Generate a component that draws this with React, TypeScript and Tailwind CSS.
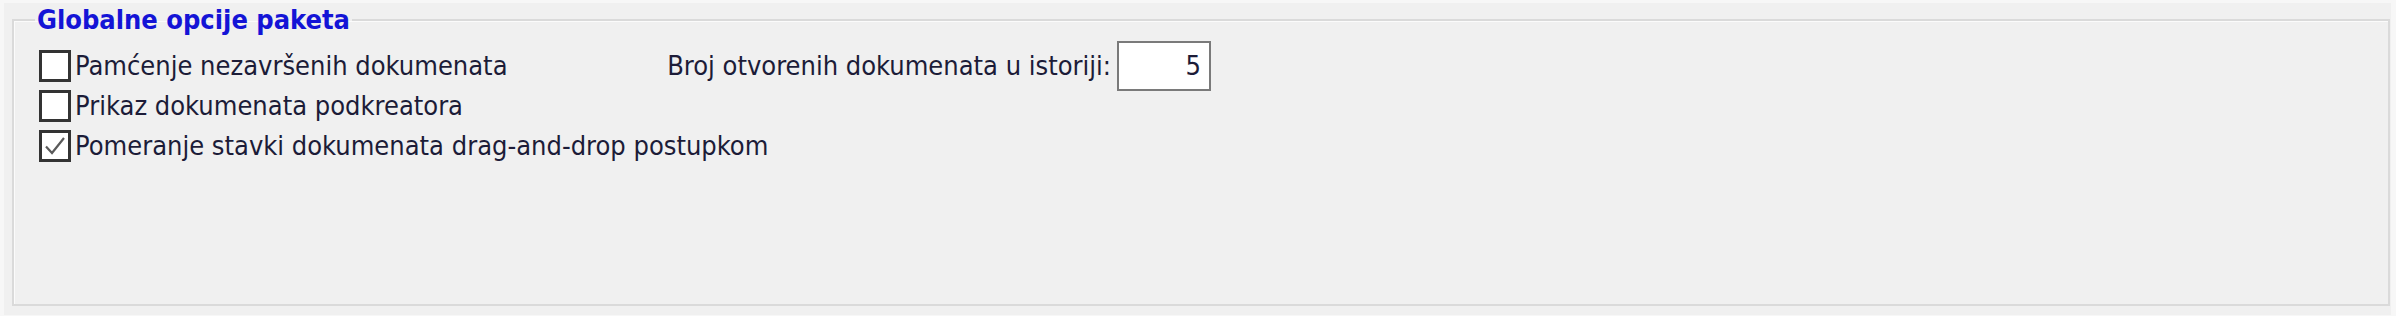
import React from "react";

const font = {
  fontFamily: '"DejaVu Sans Condensed", "DejaVu Sans", Tahoma, sans-serif',
};

const Box = ({ checked }: { checked?: boolean }) => (
  <span className="flex h-[32px] w-[32px] shrink-0 items-center justify-center border-[3px] border-[#333333] bg-white">
    {checked && (
      <svg width="24" height="24" viewBox="0 0 24 24" fill="none">
        <path d="M3 12.5 L9 19 L21 4" stroke="#5a5a5a" strokeWidth="2.2" />
      </svg>
    )}
  </span>
);

const Option = ({ label, checked }: { label: string; checked?: boolean }) => (
  <label className="flex items-center gap-[4px]">
    <Box checked={checked} />
    <span className="whitespace-nowrap">{label}</span>
  </label>
);

export default function App() {
  return (
    <div className="h-[316px] w-[2396px] bg-[#f7f7f7] pl-[4px] pr-[5px] pt-[3px] pb-[1px]" style={font}>
      <div className="h-full bg-[#f0f0f0] pl-[8px] pr-[1px] pt-[3px] text-[27px] leading-[40px] text-[#1c1c38]">
        <fieldset className="h-[300px] border-2 border-[#dadada] pl-[25px] shadow-[inset_1px_1px_0_#fbfbfb]">
          <legend className="ml-[-4px] px-[2px] text-[27px] font-bold leading-[28px] text-[#1414d6]">
            Globalne opcije paketa
          </legend>
          <div className="pt-[12px]">
            <div className="flex h-[40px] w-[1172px] items-center justify-between">
              <Option label="Pamćenje nezavršenih dokumenata" />
              <div className="flex items-center gap-[6px]">
                <span className="whitespace-nowrap">Broj otvorenih dokumenata u istoriji:</span>
                <div className="flex h-[50px] w-[94px] items-center justify-end border-2 border-[#7a7a7a] bg-white pr-[8px]">
                  5
                </div>
              </div>
            </div>
            <div className="flex h-[40px] items-center">
              <Option label="Prikaz dokumenata podkreatora" />
            </div>
            <div className="flex h-[40px] items-center">
              <Option label="Pomeranje stavki dokumenata drag-and-drop postupkom" checked />
            </div>
          </div>
        </fieldset>
      </div>
    </div>
  );
}
